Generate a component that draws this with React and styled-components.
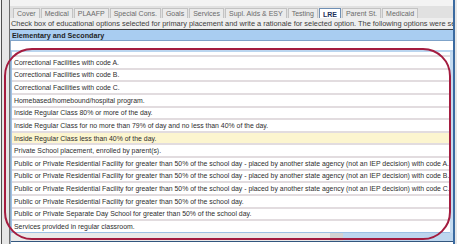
import React from "react";
import styled, { createGlobalStyle } from "styled-components";

const Global = createGlobalStyle`
  html, body { margin: 0; padding: 0; background: #f2f2f2; }
  body { font-family: "Liberation Sans", Arial, sans-serif; }
`;

const Frame = styled.div`
  position: relative;
  width: 457px;
  height: 244px;
  overflow: hidden;
  box-sizing: border-box;
  padding-left: 9px;
  padding-right: 2px;
  background: linear-gradient(to right, #f4f4f4 0 1px, #505050 1px 2px, #e6e6e6 2px);
`;

const Panel = styled.div`
  height: 100%;
  box-sizing: border-box;
  display: flex;
  flex-direction: column;
  border-left: 1px solid #6e6e6e;
  border-right: 2px solid #3b6aa0;
  background: #ececec;
`;

const TabStrip = styled.div`
  height: 18px;
  box-sizing: border-box;
  padding: 7px 0 0 3px;
  display: flex;
  align-items: flex-end;
  gap: 1px;
  background: linear-gradient(to bottom, #f3f3f3 0 6px, #e1e1e1 6px);
`;

const Tab = styled.div`
  height: ${(p) => (p.$active ? "11px" : "10px")};
  box-sizing: border-box;
  padding: 0 3px;
  display: flex;
  align-items: center;
  font-size: 7px;
  white-space: nowrap;
  border: 1px solid ${(p) => (p.$active ? "#6f8fb4" : "#c3c3c3")};
  border-bottom: none;
  background: ${(p) => (p.$active ? "#ffffff" : "#ebebeb")};
  color: ${(p) => (p.$active ? "#1c2f5a" : "#6a6a6a")};
  font-weight: ${(p) => (p.$active ? "bold" : "normal")};
  margin-bottom: ${(p) => (p.$active ? "-1px" : "0")};
`;

const Instruction = styled.div`
  height: 11px;
  box-sizing: border-box;
  padding-left: 1px;
  display: flex;
  align-items: center;
  font-size: 7.4px;
  color: #3c3c3c;
  white-space: nowrap;
  overflow: hidden;
  background: #eeeeee;
`;

const SectionHeader = styled.div`
  height: 12px;
  box-sizing: border-box;
  padding-left: 2px;
  display: flex;
  align-items: center;
  font-size: 7.2px;
  font-weight: bold;
  color: #1f1f1f;
  background: #a9cdf1;
  border-top: 1px solid #3d3d3d;
  border-bottom: 1px solid #7fa3c9;
`;

const Body = styled.div`
  flex: 1;
  display: flex;
  flex-direction: column;
  background: #ffffff;
  padding-top: 9px;
  border-left: 1px solid #8fa9c4;
`;

const ListArea = styled.div`
  display: flex;
  border-top: 2px solid #bad5ef;
  border-left: 1px solid #9fc2e6;
`;

const List = styled.div`
  flex: 1;
  padding-top: 3px;
  border-bottom: 1px solid #9cc0e4;
`;

const VScroll = styled.div`
  width: 3px;
  background: #c6dcf1;
`;

const Row = styled.div`
  height: 12.64px;
  box-sizing: border-box;
  border-top: 2px solid #e2dcdf;
  padding-left: 2px;
  display: flex;
  align-items: center;
  font-size: 6.9px;
  color: #2e2e2e;
  white-space: nowrap;
  overflow: hidden;
  background: ${(p) => (p.$highlight ? "#fcf5cf" : "#ffffff")};
`;

const HScroll = styled.div`
  height: 8px;
  display: flex;
  border-bottom: 1px solid #34577f;
`;

const HTrack = styled.div`
  flex: ${(p) => p.$grow};
  background: ${(p) => p.$color};
`;

const Annotation = styled.div`
  position: absolute;
  left: 4px;
  top: 48px;
  width: 447px;
  height: 192px;
  box-sizing: border-box;
  border: 2px solid #a41c3f;
  border-radius: 28px;
  pointer-events: none;
`;

const tabs = [
  "Cover",
  "Medical",
  "PLAAFP",
  "Special Cons.",
  "Goals",
  "Services",
  "Supl. Aids & ESY",
  "Testing",
  "LRE",
  "Parent St.",
  "Medicaid",
];

const rows = [
  "Correctional Facilities with code A.",
  "Correctional Facilities with code B.",
  "Correctional Facilities with code C.",
  "Homebased/homebound/hospital program.",
  "Inside Regular Class 80% or more of the day.",
  "Inside Regular Class for no more than 79% of day and no less than 40% of the day.",
  "Inside Regular Class less than 40% of the day.",
  "Private School placement, enrolled by parent(s).",
  "Public or Private Residential Facility for greater than 50% of the school day - placed by another state agency (not an IEP decision) with code A.",
  "Public or Private Residential Facility for greater than 50% of the school day - placed by another state agency (not an IEP decision) with code B.",
  "Public or Private Residential Facility for greater than 50% of the school day - placed by another state agency (not an IEP decision) with code C.",
  "Public or Private Residential Facility for greater than 50% of the school day.",
  "Public or Private Separate Day School for greater than 50% of the school day.",
  "Services provided in regular classroom.",
];

export default function App() {
  return (
    <>
      <Global />
      <Frame>
        <Panel>
          <TabStrip>
            {tabs.map((t) => (
              <Tab key={t} $active={t === "LRE"}>
                {t}
              </Tab>
            ))}
          </TabStrip>
          <Instruction>
            Check box of educational options selected for primary placement and write a rationale for selected option. The following options were selected:
          </Instruction>
          <SectionHeader>Elementary and Secondary</SectionHeader>
          <Body>
            <ListArea>
              <List>
                {rows.map((r, i) => (
                  <Row key={i} $highlight={i === 6}>
                    {r}
                  </Row>
                ))}
              </List>
              <VScroll />
            </ListArea>
            <HScroll>
              <HTrack $grow={318} $color="#e9e9e9" />
              <HTrack $grow={12} $color="#d2d2d2" />
              <HTrack $grow={110} $color="#bdd6ee" />
            </HScroll>
          </Body>
        </Panel>
        <Annotation />
      </Frame>
    </>
  );
}
